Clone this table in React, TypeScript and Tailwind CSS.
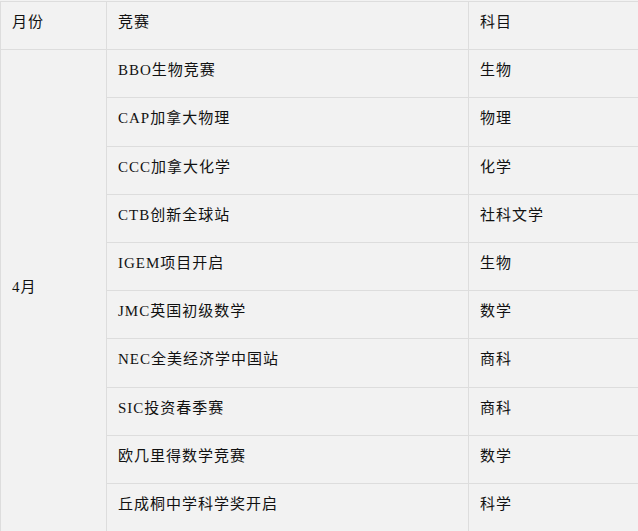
const rows: [string, string][] = [
  ["BBO生物竞赛", "生物"],
  ["CAP加拿大物理", "物理"],
  ["CCC加拿大化学", "化学"],
  ["CTB创新全球站", "社科文学"],
  ["IGEM项目开启", "生物"],
  ["JMC英国初级数学", "数学"],
  ["NEC全美经济学中国站", "商科"],
  ["SIC投资春季赛", "商科"],
  ["欧几里得数学竞赛", "数学"],
  ["丘成桐中学科学奖开启", "科学"],
];

const cell =
  "border border-[#dddddd] pl-[11px] pr-2 pt-2 pb-[15px] align-top leading-[24.2px]";

export default function App() {
  return (
    <div className="min-h-screen bg-[#f2f2f2] pt-px font-['Liberation_Serif','Noto_Sans_CJK_SC',serif] text-[15px] tracking-[1px] text-[#111111]">
      <table className="w-[638px] table-fixed border-collapse">
        <colgroup>
          <col className="w-[106px]" />
          <col className="w-[362px]" />
          <col className="w-[170px]" />
        </colgroup>
        <thead>
          <tr>
            <th className={cell + " text-left font-normal"}>月份</th>
            <th className={cell + " text-left font-normal"}>竞赛</th>
            <th className={cell + " text-left font-normal"}>科目</th>
          </tr>
        </thead>
        <tbody>
          {rows.map(([name, subject], i) => (
            <tr key={name}>
              {i === 0 && (
                <td
                  rowSpan={rows.length}
                  className="border border-[#dddddd] pl-[11px] pr-2 pt-2 pb-[15px] align-middle leading-[24.2px]"
                >
                  4月
                </td>
              )}
              <td className={cell}>{name}</td>
              <td className={cell}>{subject}</td>
            </tr>
          ))}
        </tbody>
      </table>
    </div>
  );
}
